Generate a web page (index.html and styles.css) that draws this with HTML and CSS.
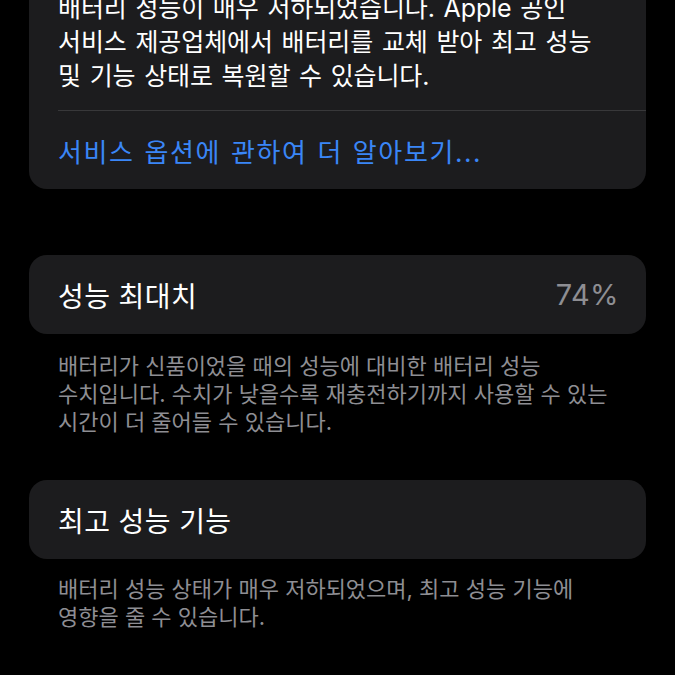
FILE: index.html
```html
<!DOCTYPE html>
<html lang="ko">
<head>
    <meta charset="UTF-8">
    <meta name="viewport" content="width=device-width, initial-scale=1.0">
    <title>배터리 성능 상태</title>
    <link rel="stylesheet" href="styles.css">
</head>
<body>
    <div class="page">
        <div class="card card-top">
            <p class="card-text">배터리 성능이 매우 저하되었습니다. Apple 공인<br>서비스 제공업체에서 배터리를 교체 받아 최고 성능<br>및 기능 상태로 복원할 수 있습니다.</p>
            <div class="divider"></div>
            <a class="card-link" href="#">서비스 옵션에 관하여 더 알아보기...</a>
        </div>

        <div class="card row">
            <span class="row-label">성능 최대치</span>
            <span class="row-value">74%</span>
        </div>
        <p class="footer">배터리가 신품이었을 때의 성능에 대비한 배터리 성능<br>수치입니다. 수치가 낮을수록 재충전하기까지 사용할 수 있는<br>시간이 더 줄어들 수 있습니다.</p>

        <div class="card row">
            <span class="row-label">최고 성능 기능</span>
        </div>
        <p class="footer">배터리 성능 상태가 매우 저하되었으며, 최고 성능 기능에<br>영향을 줄 수 있습니다.</p>

        <div class="card row next"></div>
    </div>
</body>
</html>
```

FILE: styles.css
```css
body {
    margin: 0;
    background-color: #000;
    color: #fff;
    font-family: Inter, "Noto Sans CJK KR", sans-serif;
    overflow: hidden;
}

.page {
    display: flex;
    flex-direction: column;
    padding: 0 29px;
}

.card {
    background-color: #1c1c1e;
    border-radius: 18px;
}

/* first group is scrolled partly out of view */
.card-top {
    margin-top: -29px;
    display: flex;
    flex-direction: column;
}

.card-text {
    margin: 0;
    padding: 20px 29px 17px;
    font-size: 25px;
    line-height: 34px;
    letter-spacing: -0.1px;
    word-spacing: 1.8px;
    white-space: nowrap;
}

.divider {
    height: 1px;
    margin-left: 29px;
    background-color: #38383a;
}

.card-link {
    display: block;
    padding: 25px 29px 19px;
    font-size: 26px;
    line-height: 34px;
    letter-spacing: 1.6px;
    word-spacing: 1px;
    color: #3a86f7;
    text-decoration: none;
}

.row {
    display: flex;
    align-items: center;
    justify-content: space-between;
    height: 79px;
    padding: 0 29px;
    margin-top: 66px;
    font-size: 28px;
    letter-spacing: 0.4px;
}

.row-value {
    color: #8e8e93;
    font-size: 29px;
    margin-right: -2px;
}

.footer {
    margin: 18px 0 0;
    padding: 0 29px;
    font-size: 22px;
    line-height: 28px;
    color: #8e8e93;
    white-space: nowrap;
}

.row + .footer + .row {
    margin-top: 44px;
}

.row + .footer + .row + .footer {
    margin-top: 16px;
}

.next {
    margin-top: 42px;
}
```
